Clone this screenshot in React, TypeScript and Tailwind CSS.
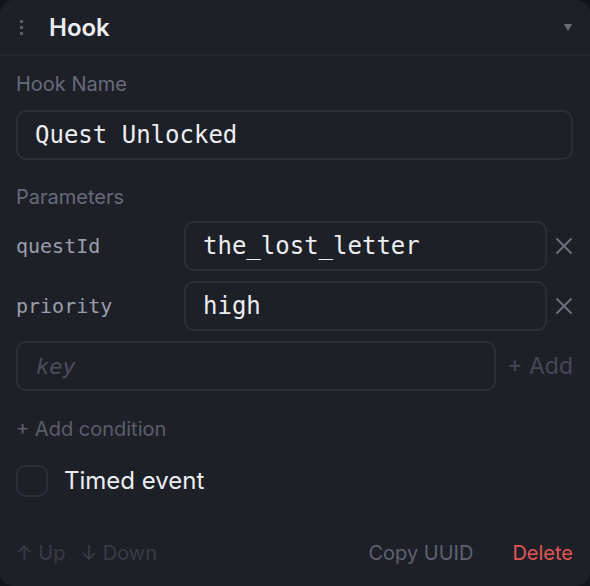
import React from "react";

const sans = { fontFamily: "Inter, 'Noto Sans', sans-serif" };
const mono = { fontFamily: "'DejaVu Sans Mono', 'Liberation Mono', monospace" };

function XIcon() {
  return (
    <svg width="18" height="18" viewBox="0 0 18 18" className="shrink-0">
      <path d="M2 2 L16 16 M16 2 L2 16" stroke="#6b6f7b" strokeWidth="2" strokeLinecap="round" />
    </svg>
  );
}

function ParamRow({ k, v }: { k: string; v: string }) {
  return (
    <div className="flex items-center h-[50px]">
      <div className="w-[168px] shrink-0 text-[20px] text-[#9a9eaa]" style={mono}>{k}</div>
      <div className="flex-1 h-[50px] rounded-[10px] border-2 border-[#2c2f3a] flex items-center pl-[17px] text-[24px] text-[#eceef2]" style={mono}>
        {v}
      </div>
      <div className="w-[26px] flex justify-end">
        <XIcon />
      </div>
    </div>
  );
}

export default function App() {
  return (
    <div className="w-[590px] h-[586px] bg-[#14151a]" style={sans}>
      <div className="w-full h-full bg-[#1e2028] rounded-[14px] flex flex-col">
        <div className="h-[56px] border-b-2 border-[#262832] flex items-center pl-[20px] pr-[18px] shrink-0">
          <div className="flex flex-col gap-[3px] w-[3px]">
            <div className="w-[3px] h-[3px] bg-[#5b5f6c]" />
            <div className="w-[3px] h-[3px] bg-[#5b5f6c]" />
            <div className="w-[3px] h-[3px] bg-[#5b5f6c]" />
          </div>
          <div className="ml-[26px] mt-[2px] text-[24px] font-semibold text-[#eceef2] flex-1">Hook</div>
          <svg width="8" height="7" viewBox="0 0 8 7">
            <path d="M0 0 H8 L4 7 Z" fill="#6b6f7b" />
          </svg>
        </div>
        <div className="flex flex-col pl-4 pr-[17px]">
          <div className="mt-[16px] h-[24px] leading-[24px] text-[20px] text-[#676b79]">Hook Name</div>
          <div className="mt-[14px] h-[50px] rounded-[10px] border-2 border-[#2c2f3a] flex items-center pl-[17px] text-[24px] text-[#eceef2]" style={mono}>
            Quest Unlocked
          </div>
          <div className="mt-[25px] h-[24px] leading-[24px] text-[20px] text-[#676b79]">Parameters</div>
          <div className="mt-[12px] flex flex-col gap-[10px]">
            <ParamRow k="questId" v="the_lost_letter" />
            <ParamRow k="priority" v="high" />
            <div className="flex items-center h-[50px]">
              <div className="w-[480px] h-[50px] rounded-[10px] border-2 border-[#2c2f3a] flex items-center pl-[18px] text-[22px] italic text-[#4b4e5a]" style={mono}>
                key
              </div>
              <div className="ml-auto text-[23px] text-[#454857]">+ Add</div>
            </div>
          </div>
          <div className="mt-[26px] h-[24px] leading-[24px] text-[20px] text-[#5a5e6b]">+ Add condition</div>
          <div className="mt-[24px] flex items-center h-[32px]">
            <div className="w-[32px] h-[32px] rounded-[9px] border-2 border-[#2c2f3a]" />
            <div className="ml-[16px] text-[24px] text-[#eceef2]">Timed event</div>
          </div>
          <div className="mt-[44px] h-[24px] flex items-center text-[20px]">
            <span className="text-[#383b47]">↑ Up</span>
            <span className="ml-[15px] text-[#383b47]">↓ Down</span>
            <span className="ml-auto text-[#5e6270]">Copy UUID</span>
            <span className="ml-[39px] text-[#e05656]">Delete</span>
          </div>
        </div>
      </div>
    </div>
  );
}
